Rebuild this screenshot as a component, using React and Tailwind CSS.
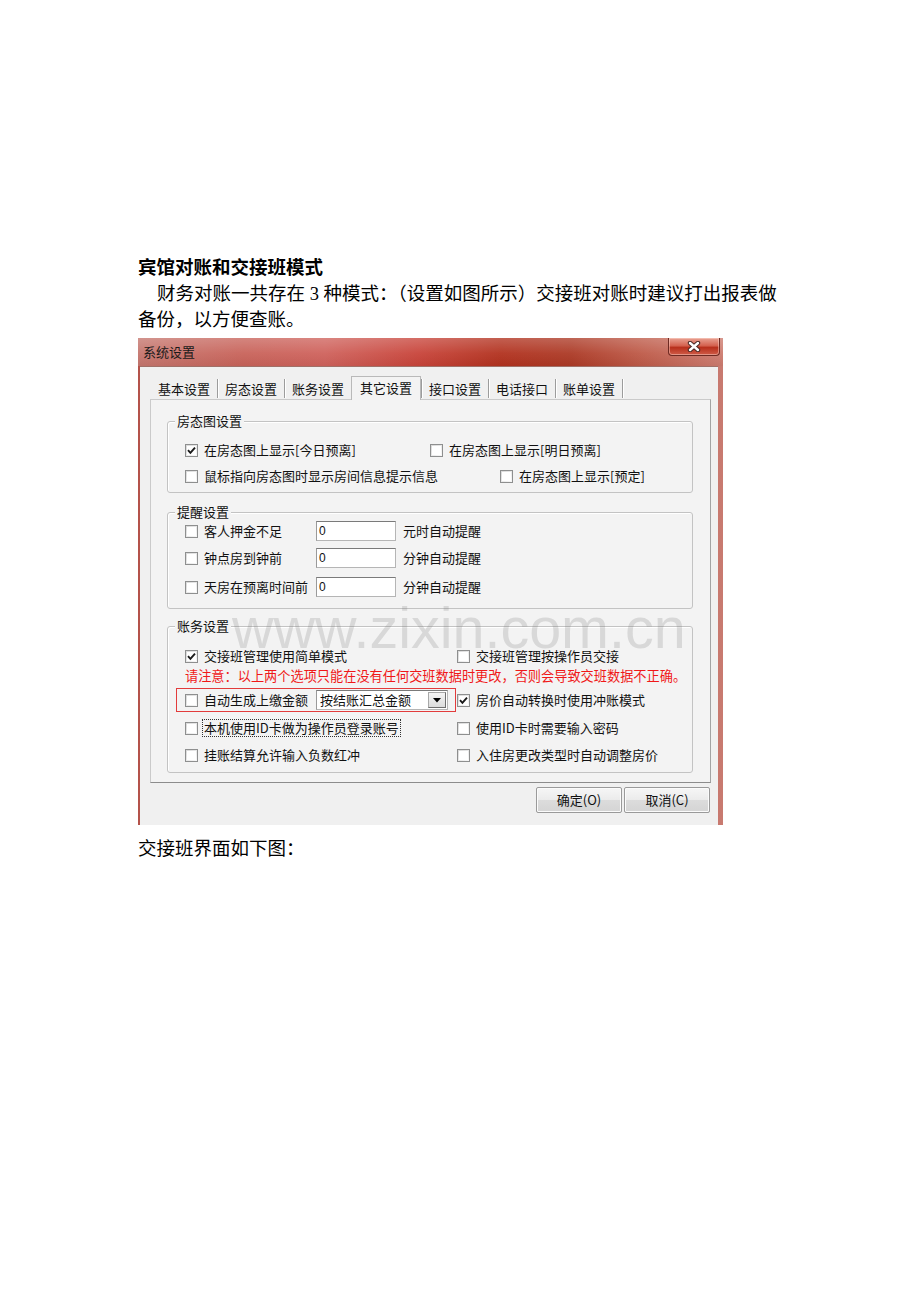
import React from "react";

function CheckBox({ checked }) {
  return (
    <span className="w-[13px] h-[13px] shrink-0 border border-[#8e8f8f] bg-[linear-gradient(135deg,#d8d8d8,#f8f8f8)] p-[1px] flex">
      <span className="flex-1 bg-white flex items-center justify-center">
        {checked && (
          <svg width="9" height="9" viewBox="0 0 9 9">
            <path d="M1 4.2 L3.4 6.8 L8 1.6" stroke="#1a1a1a" strokeWidth="1.9" fill="none" />
          </svg>
        )}
      </span>
    </span>
  );
}

function Option({ checked, label, className = "", focus }) {
  return (
    <div className={"flex items-center gap-[6px] " + className}>
      <CheckBox checked={checked} />
      <span
        className={
          "text-[13px] leading-[16px] whitespace-nowrap " +
          (focus ? "outline outline-1 outline-dotted outline-[#333] px-[1px] -ml-[1px]" : "")
        }
      >
        {label}
      </span>
    </div>
  );
}

function Group({ title, className = "", children }) {
  return (
    <div className={"relative border border-[#c3c3c3] rounded-[3px] shadow-[inset_1px_1px_0_#ffffff] " + className}>
      <span className="absolute left-[7px] top-[-9px] px-[2px] bg-[#f3f3f3] text-[13px] leading-[16px] whitespace-nowrap">
        {title}
      </span>
      {children}
    </div>
  );
}

function NumInput() {
  return (
    <div className="w-[80px] h-[20px] bg-white border border-[#b5b5b5] border-t-[#7a7a7a] border-l-[#9a9a9a] flex items-center pl-[2px] text-[12px] font-['Liberation_Sans',sans-serif]">
      0
    </div>
  );
}

function Tab({ label }) {
  return (
    <>
      <div className="h-[21px] px-[7px] flex items-center text-[13px] leading-[16px] whitespace-nowrap">{label}</div>
      <div className="w-px h-[19px] mb-[1px] bg-[#9c9c9c] shadow-[1px_0_0_#ffffff]" />
    </>
  );
}

function Button({ label }) {
  return (
    <div className="w-[86px] h-[26px] rounded-[2px] border border-[#9a9a9a] bg-[linear-gradient(180deg,#f6f6f6_0%,#ebebeb_50%,#dcdcdc_51%,#d4d4d4_100%)] shadow-[inset_0_0_0_1px_#fbfbfb] flex items-center justify-center text-[13px] leading-[16px]">
      {label}
    </div>
  );
}

function Dialog() {
  return (
    <div className="mt-[5px] w-[585px] h-[487px] flex flex-col bg-[linear-gradient(90deg,#b4524a_0%,#c0665e_40%,#c05a50_70%,#c87a70_100%)] font-['Noto_Sans_CJK_SC','Liberation_Sans',sans-serif] text-[#111]">
      {/* caption bar */}
      <div className="relative h-[28px] shrink-0 flex items-center pl-[5px] bg-[linear-gradient(90deg,#c5766e_0%,#c8635a_18%,#cf625c_32%,#c8443a_48%,#b2321f_62%,#ac3a26_74%,#be5a48_86%,#cd7c70_100%)]">
        <div className="absolute inset-0 bg-[linear-gradient(180deg,rgba(255,255,255,0.22)_0%,rgba(255,255,255,0.05)_55%,rgba(0,0,0,0.04)_100%)]" />
        <span className="relative text-[13px] leading-[16px] text-[#1a1a1a]">系统设置</span>
        <div className="absolute right-[3px] top-0 w-[52px] h-[18px] rounded-b-[4px] border border-t-0 border-[#6e2a22] bg-[linear-gradient(180deg,#e9a293_0%,#d4624f_45%,#b8301c_56%,#cf5c48_100%)] shadow-[inset_0_0_0_1px_rgba(255,220,210,0.45)] flex items-center justify-center">
          <svg width="14" height="11" viewBox="0 0 14 11">
            <path d="M3 2 L11 9 M11 2 L3 9" stroke="#4a2a26" strokeWidth="4.4" strokeLinecap="round" />
            <path d="M3 2 L11 9 M11 2 L3 9" stroke="#ffffff" strokeWidth="2.4" strokeLinecap="round" />
          </svg>
        </div>
      </div>

      {/* client area */}
      <div className="flex-1 ml-[2px] mr-[5px] bg-[#f0f0f0] border-t border-[#a07068] pl-[10px] pr-[7px] pt-[9px] flex flex-col">
        {/* tab strip */}
        <div className="h-[23px] flex items-end ml-[1px]">
          <Tab label="基本设置" />
          <Tab label="房态设置" />
          <div className="h-[21px] px-[7px] flex items-center text-[13px] leading-[16px] whitespace-nowrap">账务设置</div>
          <div className="relative z-10 h-[24px] -mb-px px-[8px] pb-[2px] flex items-center border border-b-0 border-[#b9b9b9] bg-[#f3f3f3] text-[13px] leading-[16px] whitespace-nowrap">
            其它设置
          </div>
          <div className="w-px h-[19px] mb-[1px] bg-[#9c9c9c] shadow-[1px_0_0_#ffffff]" />
          <Tab label="接口设置" />
          <Tab label="电话接口" />
          <Tab label="账单设置" />
        </div>

        {/* tab page */}
        <div className="h-[384px] border border-[#cacaca] border-r-[#a3a3a3] border-b-[#8c8c8c] bg-[#f3f3f3] pt-[21px] pl-[16px] pr-[17px] flex flex-col">
          <Group title="房态图设置" className="h-[72px] pt-[15px] pl-[17px]">
            <div className="h-[26px] flex items-center">
              <Option checked label="在房态图上显示[今日预离]" className="w-[245px]" />
              <Option label="在房态图上显示[明日预离]" />
            </div>
            <div className="h-[26px] flex items-center">
              <Option label="鼠标指向房态图时显示房间信息提示信息" className="w-[315px]" />
              <Option label="在房态图上显示[预定]" />
            </div>
          </Group>

          <Group title="提醒设置" className="mt-[19px] h-[97px] pt-[8px] pl-[17px]">
            <div className="h-[20px] flex items-center">
              <Option label="客人押金不足" className="w-[131px]" />
              <NumInput />
              <span className="ml-[7px] text-[13px] leading-[16px]">元时自动提醒</span>
            </div>
            <div className="mt-[7px] h-[20px] flex items-center">
              <Option label="钟点房到钟前" className="w-[131px]" />
              <NumInput />
              <span className="ml-[7px] text-[13px] leading-[16px]">分钟自动提醒</span>
            </div>
            <div className="mt-[9px] h-[20px] flex items-center">
              <Option label="天房在预离时间前" className="w-[131px]" />
              <NumInput />
              <span className="ml-[7px] text-[13px] leading-[16px]">分钟自动提醒</span>
            </div>
          </Group>

          <Group title="账务设置" className="mt-[17px] h-[147px] pt-[19px] pl-[17px]">
            <div className="h-[20px] flex items-center">
              <Option checked label="交接班管理使用简单模式" className="w-[272px]" />
              <Option label="交接班管理按操作员交接" />
            </div>
            <div className="h-[20px] flex items-center text-[13.2px] leading-[16px] text-[#f01818] whitespace-nowrap">
              请注意：以上两个选项只能在没有任何交班数据时更改，否则会导致交班数据不正确。
            </div>
            <div className="mt-[2px] h-[24px] flex items-center">
              <div className="-ml-[9px] w-[280px] h-[24px] border border-[#e23b3b] pl-[8px] flex items-center">
                <Option label="自动生成上缴金额" className="w-[131px]" />
                <div className="w-[132px] h-[20px] bg-white border border-[#b5b5b5] border-t-[#7a7a7a] border-l-[#9a9a9a] flex items-center pl-[3px] pr-[1px]">
                  <span className="flex-1 text-[13px] leading-[16px] whitespace-nowrap">按结账汇总金额</span>
                  <div className="w-[18px] h-[16px] bg-[linear-gradient(180deg,#f4f4f4,#dcdcdc)] border border-[#a8a8a8] border-r-[#6f6f6f] border-b-[#6f6f6f] flex items-center justify-center">
                    <svg width="8" height="5" viewBox="0 0 8 5">
                      <path d="M0 0 H8 L4 4.5 Z" fill="#000" />
                    </svg>
                  </div>
                </div>
              </div>
              <Option checked label="房价自动转换时使用冲账模式" className="ml-[1px]" />
            </div>
            <div className="mt-[6px] h-[20px] flex items-center">
              <Option focus label="本机使用ID卡做为操作员登录账号" className="w-[272px]" />
              <Option label="使用ID卡时需要输入密码" />
            </div>
            <div className="mt-[7px] h-[20px] flex items-center">
              <Option label="挂账结算允许输入负数红冲" className="w-[272px]" />
              <Option label="入住房更改类型时自动调整房价" />
            </div>
          </Group>
        </div>

        {/* command buttons */}
        <div className="mt-[4px] flex justify-end gap-[2px] pr-[1px]">
          <Button label="确定(O)" />
          <Button label="取消(C)" />
        </div>
      </div>
    </div>
  );
}

export default function App() {
  return (
    <div className="relative w-[920px] h-[1302px] bg-white overflow-hidden text-black font-['Liberation_Serif','Noto_Sans_CJK_SC',serif]">
      <div className="pt-[256px] pl-[138px]">
        <h2 className="text-[18.5px] leading-[25px] font-bold whitespace-nowrap">宾馆对账和交接班模式</h2>
        <p className="text-[18.5px] leading-[26px]">
          <span className="block whitespace-nowrap pl-[19px]">
            财务对账一共存在 3 种模式：（设置如图所示）交接班对账时建议打出报表做
          </span>
          <span className="block whitespace-nowrap">备份，以方便查账。</span>
        </p>
        <Dialog />
        <p className="mt-[11px] text-[18.5px] leading-[26px] whitespace-nowrap">交接班界面如下图：</p>
      </div>

      {/* site watermark */}
      <div className="absolute left-[232px] top-[600px] text-[57.5px] leading-none font-['Liberation_Sans',sans-serif] text-[rgba(110,110,110,0.2)] whitespace-nowrap pointer-events-none">
        www.zixin.com.cn
      </div>
    </div>
  );
}
